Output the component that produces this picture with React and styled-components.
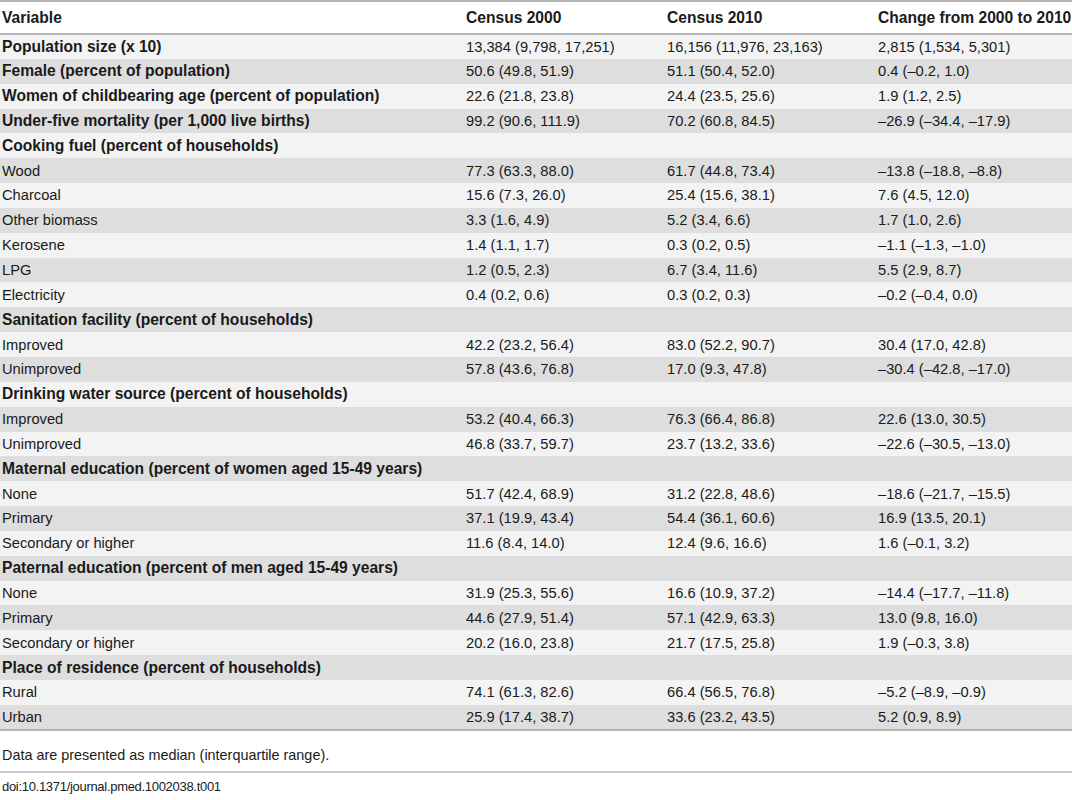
import React from "react";
import styled, { createGlobalStyle } from "styled-components";

const GlobalStyle = createGlobalStyle`
  body {
    margin: 0;
    background: #fff;
    font-family: "Liberation Sans", Arial, sans-serif;
    color: #1a1a1a;
  }
`;

const Page = styled.div`
  width: 1072px;
  overflow: hidden;
`;

const Table = styled.table`
  width: 100%;
  border-collapse: collapse;
  table-layout: fixed;
  border-top: 2px solid #b4b4b4;
  border-bottom: 2px solid #b4b4b4;
  font-size: 14.7px;
`;

const HeadCell = styled.th`
  text-align: left;
  font-weight: bold;
  font-size: 15.6px;
  height: 31px;
  padding: 0 0 0 2px;
  border-bottom: 2px solid #b4b4b4;
  background: #fff;
  white-space: nowrap;
  overflow: visible;
`;

const Row = styled.tr`
  height: 24.85px;
  background: ${(p) => (p.$dark ? "#dedede" : "#f3f3f3")};
`;

const Cell = styled.td`
  padding: 0 0 0 2px;
  white-space: nowrap;
  font-weight: ${(p) => (p.$bold ? "bold" : "normal")};
  font-size: ${(p) => (p.$bold ? "15.6px" : "14.7px")};
`;

const Note = styled.div`
  font-size: 14.4px;
  padding: 16px 2px 8px;
  border-bottom: 2px solid #c8c8c8;
`;

const Doi = styled.div`
  font-size: 13px;
  letter-spacing: -0.3px;
  padding: 6px 2px;
`;

const rows = [
  ["Population size (x 10)", "13,384 (9,798, 17,251)", "16,156 (11,976, 23,163)", "2,815 (1,534, 5,301)", true],
  ["Female (percent of population)", "50.6 (49.8, 51.9)", "51.1 (50.4, 52.0)", "0.4 (–0.2, 1.0)", true],
  ["Women of childbearing age (percent of population)", "22.6 (21.8, 23.8)", "24.4 (23.5, 25.6)", "1.9 (1.2, 2.5)", true],
  ["Under-five mortality (per 1,000 live births)", "99.2 (90.6, 111.9)", "70.2 (60.8, 84.5)", "–26.9 (–34.4, –17.9)", true],
  ["Cooking fuel (percent of households)", "", "", "", true],
  ["Wood", "77.3 (63.3, 88.0)", "61.7 (44.8, 73.4)", "–13.8 (–18.8, –8.8)"],
  ["Charcoal", "15.6 (7.3, 26.0)", "25.4 (15.6, 38.1)", "7.6 (4.5, 12.0)"],
  ["Other biomass", "3.3 (1.6, 4.9)", "5.2 (3.4, 6.6)", "1.7 (1.0, 2.6)"],
  ["Kerosene", "1.4 (1.1, 1.7)", "0.3 (0.2, 0.5)", "–1.1 (–1.3, –1.0)"],
  ["LPG", "1.2 (0.5, 2.3)", "6.7 (3.4, 11.6)", "5.5 (2.9, 8.7)"],
  ["Electricity", "0.4 (0.2, 0.6)", "0.3 (0.2, 0.3)", "–0.2 (–0.4, 0.0)"],
  ["Sanitation facility (percent of households)", "", "", "", true],
  ["Improved", "42.2 (23.2, 56.4)", "83.0 (52.2, 90.7)", "30.4 (17.0, 42.8)"],
  ["Unimproved", "57.8 (43.6, 76.8)", "17.0 (9.3, 47.8)", "–30.4 (–42.8, –17.0)"],
  ["Drinking water source (percent of households)", "", "", "", true],
  ["Improved", "53.2 (40.4, 66.3)", "76.3 (66.4, 86.8)", "22.6 (13.0, 30.5)"],
  ["Unimproved", "46.8 (33.7, 59.7)", "23.7 (13.2, 33.6)", "–22.6 (–30.5, –13.0)"],
  ["Maternal education (percent of women aged 15-49 years)", "", "", "", true],
  ["None", "51.7 (42.4, 68.9)", "31.2 (22.8, 48.6)", "–18.6 (–21.7, –15.5)"],
  ["Primary", "37.1 (19.9, 43.4)", "54.4 (36.1, 60.6)", "16.9 (13.5, 20.1)"],
  ["Secondary or higher", "11.6 (8.4, 14.0)", "12.4 (9.6, 16.6)", "1.6 (–0.1, 3.2)"],
  ["Paternal education (percent of men aged 15-49 years)", "", "", "", true],
  ["None", "31.9 (25.3, 55.6)", "16.6 (10.9, 37.2)", "–14.4 (–17.7, –11.8)"],
  ["Primary", "44.6 (27.9, 51.4)", "57.1 (42.9, 63.3)", "13.0 (9.8, 16.0)"],
  ["Secondary or higher", "20.2 (16.0, 23.8)", "21.7 (17.5, 25.8)", "1.9 (–0.3, 3.8)"],
  ["Place of residence (percent of households)", "", "", "", true],
  ["Rural", "74.1 (61.3, 82.6)", "66.4 (56.5, 76.8)", "–5.2 (–8.9, –0.9)"],
  ["Urban", "25.9 (17.4, 38.7)", "33.6 (23.2, 43.5)", "5.2 (0.9, 8.9)"],
];

export default function App() {
  return (
    <Page>
      <GlobalStyle />
      <Table>
        <colgroup>
          <col style={{ width: 464 }} />
          <col style={{ width: 201 }} />
          <col style={{ width: 211 }} />
          <col />
        </colgroup>
        <thead>
          <tr>
            <HeadCell>Variable</HeadCell>
            <HeadCell>Census 2000</HeadCell>
            <HeadCell>Census 2010</HeadCell>
            <HeadCell>Change from 2000 to 2010</HeadCell>
          </tr>
        </thead>
        <tbody>
          {rows.map((r, i) => (
            <Row key={i} $dark={i % 2 === 1}>
              <Cell $bold={r[4]}>{r[0]}</Cell>
              <Cell>{r[1]}</Cell>
              <Cell>{r[2]}</Cell>
              <Cell>{r[3]}</Cell>
            </Row>
          ))}
        </tbody>
      </Table>
      <Note>Data are presented as median (interquartile range).</Note>
      <Doi>doi:10.1371/journal.pmed.1002038.t001</Doi>
    </Page>
  );
}
